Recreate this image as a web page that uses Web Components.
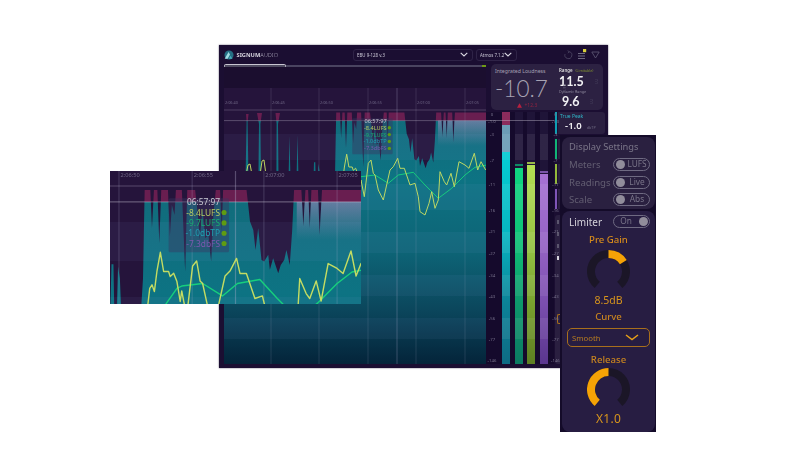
<!DOCTYPE html>
<html><head><meta charset="utf-8"><title>Signum Audio</title>
<style>
html,body{margin:0;padding:0;background:#fff;width:800px;height:450px;overflow:hidden;font-family:"Noto Sans","Liberation Sans",sans-serif}
body>*{filter:blur(.4px)}
</style></head><body>
<sa-main></sa-main>
<sa-chart view="313 100 168 88.67" style="position:absolute;left:110px;top:170.5px;width:251px;height:133px"></sa-chart>
<sa-settings></sa-settings>
<script>
const FONT='"Noto Sans","Liberation Sans",sans-serif';
const z5=(x,y)=>[368+(105+x/3-192)/1.5,120.6+(165+y/3-202)/1.5];
const z6=(x,y)=>[355+x/3,110+y/3];
const fmt=a=>a.map(p=>p[0].toFixed(1)+','+p[1].toFixed(1)).join(' ');
const pairs=s=>s.trim().split(/\s+/).map(t=>t.split(',').map(Number));

const profile=[[224,364],[224,180],[245.5,180],[246.6,122],[246,114],[248.6,114],[247.6,122],[248.5,180],[258.4,180],[259,124],[257,113],[262,113],[260.4,124],[261,180],[276.4,180],[276.6,124],[275.5,113],[280,113],[278,124],[278.5,180],[288.5,180],[289.5,136],[290.5,180],[296.5,180],[297.5,135],[298.5,180],[312,190],
 ...pairs('15,420 18,298 24,298 26,420 34,420 38,305 43,340 47,420 108,420 113,340 118,75 135,75 140,190 146,75 156,75 162,235 168,75 188,75 194,215 200,120 208,150 212,75 230,75 240,320 246,75 270,75 278,150 284,225 292,130 300,220 310,210 318,290 325,150 332,75 345,75 350,200 354,75 425,75 435,170 445,195 452,255 460,190 470,285 478,290 490,270 495,315 505,280 520,325 528,300 538,285 545,255 555,300 562,200 568,75 590,75 596,185 602,75 610,75 615,190 620,75 640,75 645,210 652,75 770,75').map(p=>z5(p[0],p[1])),
 [486,112.6],[486,364]];
const yellowL=pairs('246,175 248,165 250,164 251.5,172 260,175 262,161 264,160 266,175');
const yellow=[...pairs('125,440 133,370 140,360 147,380 155,320 165,262 175,320 190,320 195,335 205,325 215,350 225,410').map(p=>z5(p[0],p[1])),
 ...pairs('18,210 28,260 40,160 48,150 55,190 60,195 70,240 85,270 105,180 115,170 128,145 135,175 148,175 165,225 180,220 190,260 195,305 210,315 222,280 230,245 240,295 250,270 255,185 268,215 275,225 288,190 298,230 312,155 330,165 342,175 358,130 368,180 378,155 392,180').map(p=>z6(p[0],p[1]))];
const green=[...pairs('180,420 215,370').map(p=>z5(p[0],p[1])),
 ...pairs('18,200 60,195 100,220 130,195 175,187 210,225 250,265 290,235 330,195 360,172 395,165').map(p=>z6(p[0],p[1]))];
const bands=[[134,160],[184,210],[232,253],[275,296],[318,339]];
const gx=[271,319,368,397,416,465];
const labels=[['2:06:40',225],['2:06:45',272],['2:06:50',320],['2:06:55',369],['2:07:00',417],['2:07:05',466]];
const [tx0,ty0]=z5(190,100),[tx1,ty1]=z5(372,262);
const tipRows=[['06:57:97',112,'#c9c8d2',0],['-8.4LUFS',143,'#b4cc62',1],['-9.7LUFS',174,'#18ad70',1],['-1.0dbTP',205,'#1fa0b2',1],['-7.3dbFS',236,'#7c58b0',1]];

customElements.define('sa-chart',class extends HTMLElement{
 connectedCallback(){
  const v=this.getAttribute('view')||'224 67 262 297';
  const minX=+v.split(' ')[0];
  const s=this.attachShadow({mode:'open'});
  s.innerHTML=`<style>:host{display:block;overflow:hidden;background:#1b0e2f}svg{display:block;width:100%;height:100%}text{font-family:${FONT}}</style>
  <svg viewBox="${v}" preserveAspectRatio="none" xmlns="http://www.w3.org/2000/svg">
   <defs>
    <linearGradient id="t" gradientUnits="userSpaceOnUse" x1="0" y1="120" x2="0" y2="364">
     <stop offset="0" stop-color="#116c7c"/><stop offset=".25" stop-color="#0d7383"/><stop offset=".55" stop-color="#0d6375"/><stop offset=".78" stop-color="#0b465c"/><stop offset="1" stop-color="#04243a"/>
    </linearGradient>
    <linearGradient id="g" gradientUnits="userSpaceOnUse" x1="0" y1="120" x2="0" y2="146">
     <stop offset="0" stop-color="#9a88b8" stop-opacity=".62"/><stop offset="1" stop-color="#9a88b8" stop-opacity="0"/>
    </linearGradient>
    <clipPath id="area"><polygon points="${fmt(profile)}"/></clipPath>
   </defs>
   <rect x="224" y="67" width="262" height="297" fill="#1b0e2f"/>
   <rect x="224" y="88" width="262" height="276" fill="#25143b"/>
   <g clip-path="url(#area)">
    <rect x="224" y="120.6" width="262" height="244" fill="url(#t)"/>
    <rect x="224" y="100" width="262" height="20.6" fill="#691e50"/>
    <rect x="438" y="120.6" width="48" height="26" fill="url(#g)"/>
   </g>
   ${bands.map(b=>`<rect x="224" y="${b[0]}" width="262" height="${b[1]-b[0]}" fill="#9cb0ff" opacity=".055"/>`).join('')}
   ${gx.map(x=>`<line x1="${x}" x2="${x}" y1="88" y2="364" stroke="#b6b2d0" stroke-opacity="${x==397?.36:.2}" stroke-width=".8"/>`).join('')}
   <line x1="224" x2="486" y1="110" y2="110" stroke="#c4bfd6" stroke-opacity=".32" stroke-width=".8"/>
   <line x1="224" x2="486" y1="120.6" y2="120.6" stroke="#d4d0e0" stroke-opacity=".38" stroke-width=".8"/>
   ${labels.filter(l=>l[1]>=minX).map(l=>`<text x="${l[1]}" y="104.2" font-size="3.8" fill="#6f6685">${l[0]}</text>`).join('')}
   <rect x="${tx0}" y="${ty0}" width="${tx1-tx0}" height="${ty1-ty0}" rx="1" fill="#3a3560" fill-opacity=".42"/>
   <polyline points="${fmt(green)}" fill="none" stroke="#17cf7c" stroke-width=".95" stroke-linejoin="round"/>
   <polyline points="${fmt(yellowL)}" fill="none" stroke="#c4dc62" stroke-width=".95" stroke-linejoin="round"/>
   <polyline points="${fmt(yellow)}" fill="none" stroke="#c4dc62" stroke-width=".95" stroke-linejoin="round"/>
   ${tipRows.map(r=>{const p=z5(345,r[1]+9),d=z5(357,r[1]);return `<text x="${p[0]}" y="${p[1]}" text-anchor="end" font-size="5.6" fill="${r[2]}">${r[0]}</text>`+(r[3]?`<circle cx="${d[0]}" cy="${d[1]}" r="1.7" fill="#5f9c12"/>`:'')}).join('')}
  </svg>`;
 }
});

customElements.define('sa-header',class extends HTMLElement{
 connectedCallback(){
  this.attachShadow({mode:'open'}).innerHTML=`<style>
  :host{display:flex;align-items:center;height:19px;padding:0 5px;box-sizing:border-box;color:#c9c6d4}
  .logo{display:flex;align-items:center;gap:2px;width:129px;font-size:5.7px}
  .logo b{font-weight:700;color:#d6d4de}.logo span{font-weight:300;color:#a9a5b8}
  .dd{display:flex;align-items:center;justify-content:space-between;height:12px;box-sizing:border-box;border:1px solid #2f2347;border-radius:3px;font-size:4.4px;padding:0 4px 0 3px;color:#c9c6d4;white-space:nowrap}
  .a{width:120px;margin-right:3px}.b{width:41px}
  .icons{margin-left:auto;display:flex;align-items:center;gap:4px;padding-right:3px}
  svg{display:block;flex:none}
  </style>
  <div class="logo"><svg width="10" height="10" viewBox="0 0 11 11"><circle cx="5.5" cy="5.5" r="5" fill="#256f84"/><path d="M.8 9.5 5 2.2l1.6 2.7L4 9.5z" fill="#9fdbe2"/><path d="M5.2 9.6 7 6.4l2.4 3.2z" fill="#46aab8"/></svg><div style="display:flex;margin-left:.5px"><b>SIGNUM</b><span>AUDIO</span></div></div>
  <div class="dd a">EBU 9-128 v.3<svg width="8" height="5" viewBox="0 0 8 5"><path d="M.7.8 4 3.9 7.3.8" fill="none" stroke="#dcdae4" stroke-width="1.1"/></svg></div>
  <div class="dd b">Atmos 7.1.2<svg width="8" height="5" viewBox="0 0 8 5"><path d="M.7.8 4 3.9 7.3.8" fill="none" stroke="#dcdae4" stroke-width="1.1"/></svg></div>
  <div class="icons">
   <svg width="10" height="10" viewBox="0 0 10 10"><path d="M6.3 1.7A3.5 3.5 0 1 1 2 4.1M6.3 1.7 4.6.7M6.3 1.7 5 3.2" fill="none" stroke="#4a4360" stroke-width=".9"/></svg>
   <svg width="10" height="12" viewBox="0 0 10 12"><path d="M1 4.5h7M1 7h7M1 9.5h7" stroke="#6d6780" stroke-width="1.1"/><rect x="6" y="0" width="3.2" height="3.2" fill="#d8cf3a"/></svg>
   <svg width="9" height="8" viewBox="0 0 9 8"><path d="M.8 1h7.4L4.5 7z" fill="none" stroke="#5a5370" stroke-width=".9"/></svg>
  </div>`;
 }
});

customElements.define('sa-progress',class extends HTMLElement{
 connectedCallback(){
  this.attachShadow({mode:'open'}).innerHTML=`<style>
  :host{display:flex;align-items:center;height:4px}
  .th{width:62px;height:4px;box-sizing:border-box;border:1px solid #c8c6d2;border-radius:1.5px;background:#4e4a60}
  .ln{flex:1;height:1.2px;background:#4a4460}.g{width:4px;height:2px;background:#6f9a16}
  </style><div class="th"></div><div class="ln"></div><div class="g"></div>`;
 }
});

customElements.define('sa-loudness',class extends HTMLElement{
 connectedCallback(){
  this.attachShadow({mode:'open'}).innerHTML=`<style>
  :host{display:flex;height:46px;margin-left:5px;width:112px;box-sizing:border-box;background:#2c2142;border-radius:5px;padding:3px 4px;color:#fff}
  .l{width:64px;display:flex;flex-direction:column}
  .t{font-size:5.2px;line-height:8px;color:#a5a0b2;white-space:nowrap}
  .big{font-family:Lato,"Open Sans",sans-serif;font-weight:300;font-size:22.5px;line-height:27px;height:27px;color:#a7a3b3;display:flex;align-items:center;gap:3px;white-space:nowrap}
  .u{font-size:3.6px;color:#55506a;writing-mode:vertical-rl;transform:rotate(180deg);letter-spacing:.2px;font-weight:400;font-family:"Noto Sans",sans-serif}
  .d{display:flex;align-items:center;gap:2.5px;font-size:5px;line-height:7px;color:#8f2340;padding-left:22px}
  .r{flex:1;display:flex;flex-direction:column}
  .rt{font-size:4.4px;line-height:7px;height:7px;color:#ddd;white-space:nowrap;font-weight:600;display:flex}.rt i{font-style:normal;color:#85972f;margin-left:3px;font-weight:400;font-size:3.6px}
  .n{font-family:Lato,"Noto Sans",sans-serif;font-weight:700;font-size:12.5px;line-height:15px;height:15px;color:#f2f2f4;display:flex;align-items:center;gap:6px}
  .s{font-size:3.7px;line-height:5px;height:5px;color:#8f8a9e;white-space:nowrap}
  .n .u{font-size:3.2px;font-weight:400}
  </style>
  <div class="l"><div class="t">Integrated Loudness</div><div class="big">-10.7<span class="u">LUFS</span></div>
   <div class="d"><svg width="5" height="5" viewBox="0 0 5 5"><path d="M2.5.3 5 4.8H0z" fill="#b8203f"/></svg><span>+12.3</span></div></div>
  <div class="r"><div class="rt">Range<i>(Limitable)</i></div><div class="n">11.5<span class="u">LU</span></div><div class="s">Dynamic Range</div><div class="n" style="padding-left:3px">9.6<span class="u">LU</span></div></div>`;
 }
});

const ticks=[['0',114],['-1.0',120.6],['-3',134],['-7',160],['-11',184],['-16',210],['-21',231],['-27',253],['-34',275],['-43',296],['-56',318],['-77',339],['-146',360.5]];
customElements.define('sa-scale',class extends HTMLElement{
 connectedCallback(){
  const rows=ticks.map((t,i)=>`<div style="height:${(i<ticks.length-1?ticks[i+1][1]:364)-t[1]}px">${t[0]}</div>`).join('');
  this.attachShadow({mode:'open'}).innerHTML=`<style>:host{display:block;padding-top:2px;box-sizing:border-box;text-align:center;font-size:4.3px;color:#78728c}
  div{line-height:0;white-space:nowrap}</style>${rows}`;
 }
});
const bandGrad=(()=>{const st=[];bands.forEach(b=>{const a=b[0]-112,e=b[1]-112;st.push(`transparent ${a}px,rgba(255,255,255,.07) ${a}px,rgba(255,255,255,.07) ${e}px,transparent ${e}px`)});return 'linear-gradient(to bottom,'+st.join(',')+')'})();
customElements.define('sa-bar',class extends HTMLElement{
 connectedCallback(){
  const top=+this.getAttribute('top'),peak=this.getAttribute('peak'),fill=this.getAttribute('fill');
  this.attachShadow({mode:'open'}).innerHTML=`<style>
  :host{display:flex;flex-direction:column;position:relative;background:#1f1438;height:252px}
  :host::after{content:"";position:absolute;inset:0;background:${bandGrad}}
  .sp{flex:none;height:${top-112}px;display:flex;flex-direction:column}
  .p{height:${peak?(peak-112):0}px;flex:none}.m{height:1.6px;background:${this.getAttribute('pc')||'transparent'};flex:none}
  .f{flex:1;background:${fill}}
  </style><div class="sp"><div class="p"></div><div class="m"></div></div><div class="f"></div>`;
 }
});
customElements.define('sa-meters',class extends HTMLElement{
 connectedCallback(){
  this.attachShadow({mode:'open'}).innerHTML=`<style>
  :host{display:grid;position:relative;grid-template-columns:12px 8px 8px 8px 8px 11px;column-gap:4.4px;width:68px;height:252px;background:#150a2c;box-sizing:border-box}
  :host::after{content:"";position:absolute;left:0;right:0;top:8.2px;height:.8px;background:rgba(212,208,224,.38)}
  sa-scale:first-child{margin-right:-4px}sa-scale:last-child{margin-left:-4px}
  </style>
  <sa-scale></sa-scale>
  <sa-bar top="112" fill="linear-gradient(to bottom,#8b2b5c 0,#8b2b5c 13px,#6c9cb6 13px,#6c9cb6 40px,#04ccd3 40px,#07b6c2 120px,#0c8298 190px,#0e6b84 252px)"></sa-bar>
  <sa-bar top="168" peak="164" pc="#0f8a64" fill="linear-gradient(to bottom,#10d681,#10c277 70px,#0e9a6c 130px,#0b7a62)"></sa-bar>
  <sa-bar top="165" peak="162" pc="#98b848" fill="linear-gradient(to bottom,#b4de52,#96c244 80px,#78a02e 140px,#5e7f22)"></sa-bar>
  <sa-bar top="174" peak="171" pc="#7a55a8" fill="linear-gradient(to bottom,#a672d2,#9564c4 70px,#7a4eae 130px,#5a368e)"></sa-bar>
  <sa-scale></sa-scale>`;
 }
});
customElements.define('sa-readout',class extends HTMLElement{
 connectedCallback(){
  const c=this.getAttribute('color');
  this.attachShadow({mode:'open'}).innerHTML=`<style>
  :host{display:flex;height:${this.getAttribute('h')||20}px;gap:1.5px}
  .s{width:1.6px;background:${c};flex:none}
  .b{flex:1;background:#2a1f40;border-radius:0 3px 3px 0;overflow:hidden;display:flex;flex-direction:column;padding:1px 2px;box-sizing:border-box}
  </style><div class="s"></div><div class="b"><slot></slot></div>`;
 }
});
customElements.define('sa-main',class extends HTMLElement{
 connectedCallback(){
  this.attachShadow({mode:'open'}).innerHTML=`<style>
  :host{position:absolute;left:219px;top:45px;width:389px;height:323px;background:#1b0e32;box-shadow:0 0 1.5px rgba(40,30,60,.75);display:block}
  .body{display:grid;grid-template-columns:262px 122px;padding-left:5px}
  .c{display:flex;flex-direction:column}
  sa-chart{height:297px;margin-top:-1px}
  .r{display:flex;flex-direction:column;gap:2px}
  .row{display:flex;gap:1px}
  .side{width:50px;display:flex;flex-direction:column;gap:5px}
  .tp{font-size:5px;line-height:7px;color:#2fb7c9;white-space:nowrap}
  .tv{font-size:9.5px;line-height:12px;font-weight:600;color:#f2f2f4;white-space:nowrap;padding-left:5px}.tv i{font-style:normal;font-weight:400;font-size:3.8px;color:#6f6a82;margin-left:5px}
  .st{flex:1;background:#2a1f40;border-radius:3px;margin-top:1px;padding:5px 0 0 2px;display:flex;flex-direction:column;gap:8px}
  .st i{display:block;width:2.4px;height:4px;background:#5c566e}
  .st i.w{background:#d5d3dc}
  .or{width:3px;height:8px;border:1px solid #a86f1c;border-right:0;border-radius:2px 0 0 2px;margin-top:46px}
  </style>
  <sa-header></sa-header>
  <div class="body"><div class="c"><sa-progress></sa-progress><sa-chart></sa-chart></div>
   <div class="r"><sa-loudness></sa-loudness>
    <div class="row"><sa-meters></sa-meters><div class="side">
     <sa-readout color="#0e9fb4" h="22"><div class="tp">True Peak</div><div class="tv">-1.0<i>dbTP</i></div></sa-readout>
     <sa-readout color="#11b377" h="20"></sa-readout>
     <sa-readout color="#93b83a" h="20"></sa-readout>
     <sa-readout color="#7f55b8" h="20"></sa-readout>
     <div class="st"><i></i><i></i><i></i><i class="w"></i><div class="or"></div></div>
    </div></div>
   </div></div>`;
 }
});
customElements.define('sa-toggle',class extends HTMLElement{
 connectedCallback(){
  const right=this.hasAttribute('right');
  this.attachShadow({mode:'open'}).innerHTML=`<style>
  :host{display:flex;align-items:center;width:37px;height:13px;box-sizing:border-box;border:1px solid #6f6a82;border-radius:7px;padding:0 1.5px;gap:2px;font-size:8.3px;color:#7a7589;flex-direction:${right?'row-reverse':'row'};justify-content:space-between}
  i{width:9px;height:9px;border-radius:50%;background:#918d9b;flex:none}
  span{flex:1;text-align:center;line-height:1}
  </style><i></i><span><slot></slot></span>`;
 }
});
customElements.define('sa-knob',class extends HTMLElement{
 connectedCallback(){
  const a=+this.getAttribute('from'),b=+this.getAttribute('to');
  const R=17.5,C=21.5,pt=d=>{const r=(d-90)*Math.PI/180;return (C+R*Math.cos(r)).toFixed(2)+' '+(C+R*Math.sin(r)).toFixed(2)};
  const arc=(s,e)=>`M${pt(s)}A${R} ${R} 0 ${e-s>180?1:0} 1 ${pt(e)}`;
  this.attachShadow({mode:'open'}).innerHTML=`<style>:host{display:block;width:43px;height:43px}svg{display:block}</style>
  <svg width="43" height="43" viewBox="0 0 43 43"><path d="${arc(-140,140)}" fill="none" stroke="#1b1627" stroke-width="8"/><path d="${arc(a,b)}" fill="none" stroke="#f5a206" stroke-width="8"/></svg>`;
 }
});
customElements.define('sa-settings',class extends HTMLElement{
 connectedCallback(){
  this.attachShadow({mode:'open'}).innerHTML=`<style>
  :host{position:absolute;left:560px;top:135px;width:96px;height:297px;background:#140b29;display:flex;flex-direction:column;gap:2px;padding:1.5px 1px 0 2px;box-sizing:border-box;font-size:10px}
  .card{background:#2a2040;border-radius:8px}
  .d{height:72px;flex:none;padding:2px 5px 0 7px;box-sizing:border-box;color:#635e72}
  .dt{font-size:9.3px;line-height:15px;color:#7a7588;white-space:nowrap}
  .row{display:flex;justify-content:space-between;align-items:center;height:13px;margin-top:4.5px;font-size:9.6px;white-space:nowrap}
  .row:first-of-type{margin-top:4px}
  .l{flex:1;background:#271d42;border-radius:8px;display:flex;flex-direction:column;align-items:center;color:#c8841f;padding-top:4px}
  .top{align-self:stretch;display:flex;justify-content:space-between;align-items:center;padding:0 5px 0 7px;color:#d4d2da;height:14px;white-space:nowrap}
  .h{font-size:9.6px;line-height:14px;font-weight:500}
  .v{font-size:10.5px;line-height:13px}
  .sel{width:83px;height:19px;flex:none;border:1px solid #a86f1c;border-radius:5px;box-sizing:border-box;display:flex;align-items:center;justify-content:space-between;padding:0 10px 0 4px;font-size:7.8px;color:#b87c20;margin-top:4px}
  </style>
  <div class="card d"><div class="dt">Display Settings</div>
   <div class="row"><span>Meters</span><sa-toggle>LUFS</sa-toggle></div>
   <div class="row"><span>Readings</span><sa-toggle>Live</sa-toggle></div>
   <div class="row"><span>Scale</span><sa-toggle>Abs</sa-toggle></div>
  </div>
  <div class="l"><div class="top"><span>Limiter</span><sa-toggle right>On</sa-toggle></div>
   <div class="h" style="margin-top:4px;color:#d48a1c">Pre Gain</div>
   <sa-knob from="0" to="58" style="margin-top:3px"></sa-knob>
   <div class="v" style="margin-top:1.5px;color:#d8951c">8.5dB</div>
   <div class="h" style="margin-top:3px">Curve</div>
   <div class="sel">Smooth<svg width="14" height="7" viewBox="0 0 14 7"><path d="M1 1l6 4.5L13 1" fill="none" stroke="#e8a018" stroke-width="1.5"/></svg></div>
   <div class="h" style="margin-top:6px">Release</div>
   <sa-knob from="-140" to="0" style="margin-top:1px"></sa-knob>
   <div class="v" style="margin-top:1px;font-size:12px;color:#d8951c;letter-spacing:.3px">X1.0</div>
  </div>`;
 }
});
</script>
</body></html>
